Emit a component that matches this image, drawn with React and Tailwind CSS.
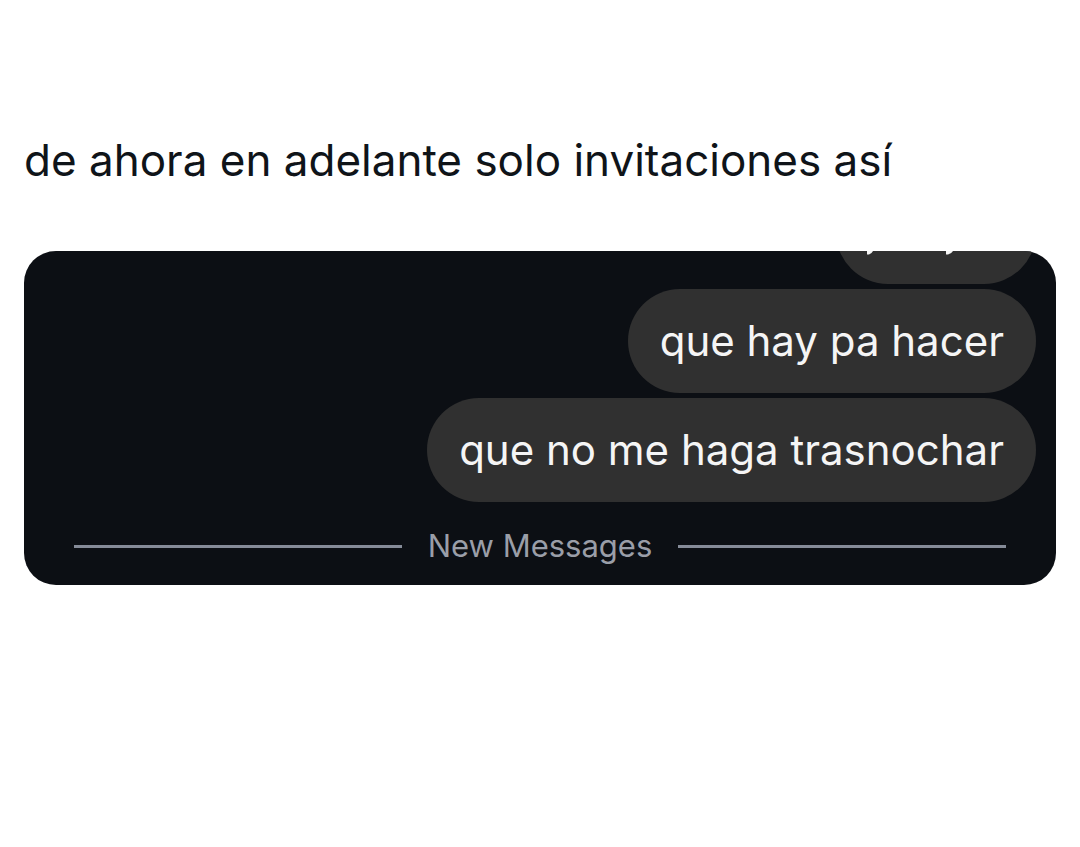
function Bubble({ children }) {
  return (
    <li className="flex h-[104px] items-center rounded-full bg-[#303030] px-8 pb-[2px]">
      {children}
    </li>
  );
}

// Earlier message scrolled out of view: only its lower edge shows.
function ClippedBubble() {
  return (
    <li className="-mt-[71px] h-[104px] w-[200px] rounded-full bg-[#303030]">
      <svg aria-hidden="true" viewBox="0 0 200 104" className="h-full w-full" fill="#f5f5f5">
        <path d="M31 69H38Q36 74 33 74.5L31 74.5Z" />
        <path d="M110 69H118Q116 74 112 74.5L110 74.5Z" />
      </svg>
    </li>
  );
}

export default function App() {
  return (
    <main className="min-h-screen bg-white px-6 pt-[132px] font-['Inter',sans-serif]">
      <p className="text-[44px] leading-[56px] text-[#0f1419]">
        de ahora en adelante solo invitaciones así
      </p>
      <section className="mt-[63px] overflow-hidden rounded-[32px] bg-[#0c0f14] pb-[19px]">
        <ul className="flex flex-col items-end gap-[5px] pr-5 text-[42px] text-[#f5f5f5]">
          <ClippedBubble />
          <Bubble>que hay pa hacer</Bubble>
          <Bubble>que no me haga trasnochar</Bubble>
        </ul>
        <div className="mt-6 flex items-center gap-[26px] px-[50px]">
          <span className="h-[3px] flex-1 bg-[#858b98]" />
          <span className="text-[31px] leading-[40px] text-[#9a9ea8]">New Messages</span>
          <span className="h-[3px] flex-1 bg-[#858b98]" />
        </div>
      </section>
    </main>
  );
}
